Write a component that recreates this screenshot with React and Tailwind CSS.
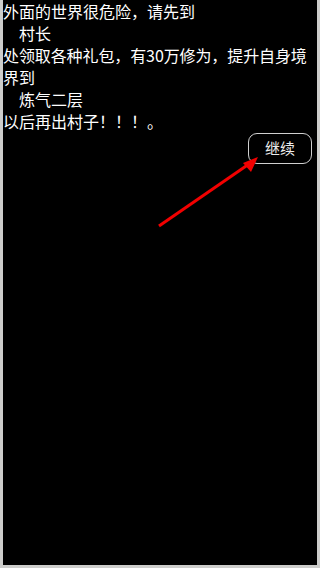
import React from "react";

const font = { fontFamily: '"Noto Sans CJK SC", "Noto Sans", sans-serif' };

export default function App() {
  return (
    <div className="w-[320px] h-[568px] bg-[#cdcdcb] flex flex-col pl-[3px] pr-[3px] pb-[3px]">
      <div className="relative flex-1 bg-black text-white text-[16px]" style={font}>
        <div className="flex flex-col leading-[22px]">
          <div className="whitespace-nowrap">外面的世界很危险，请先到</div>
          <div className="pl-4 whitespace-nowrap">村长</div>
          <div className="whitespace-nowrap tracking-[-0.1px]">处领取各种礼包，有30万修为，提升自身境</div>
          <div className="whitespace-nowrap">界到</div>
          <div className="pl-4 whitespace-nowrap">炼气二层</div>
          <div className="whitespace-nowrap">以后再出村子！！！。</div>
        </div>
        <div className="flex justify-end pr-[5px] mt-[1px]">
          <button className="w-[64px] h-[31px] rounded-[9px] border border-[#d0d0d0] text-[#ececec] text-[15px] flex items-center justify-center" style={font}>
            继续
          </button>
        </div>
        <svg className="absolute left-0 top-0 pointer-events-none" width="314" height="300" viewBox="0 0 314 300">
          <line x1="156" y1="226" x2="246" y2="164" stroke="#f20000" strokeWidth="3" />
          <polygon points="255,157 240,163 248,172" fill="#f20000" />
        </svg>
      </div>
    </div>
  );
}
